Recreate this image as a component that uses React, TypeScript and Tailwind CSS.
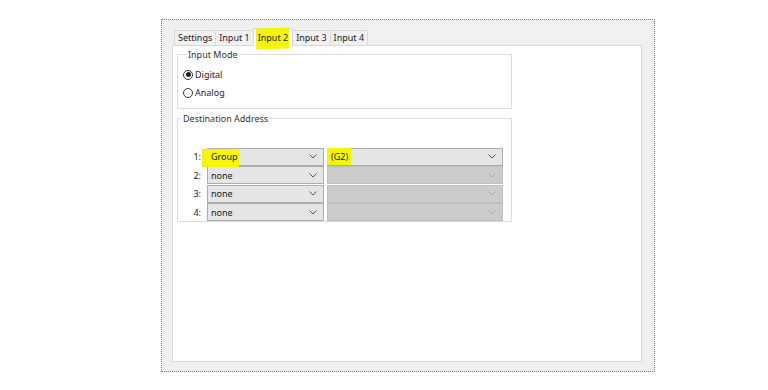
import React from 'react';

const tabs = ['Settings', 'Input 1', 'Input 2', 'Input 3', 'Input 4'];

function Marker({ children, className }: { children: React.ReactNode; className: string }) {
  // yellow highlighter stroke drawn behind the text
  return (
    <span className="relative isolate">
      <span className={`absolute -z-10 bg-[#f4f40c] ${className}`} />
      {children}
    </span>
  );
}

function Chevron({ disabled }: { disabled?: boolean }) {
  return (
    <svg width="8" height="5" viewBox="0 0 8 5" className="shrink-0">
      <path d="M0.5 0.5 L4 4 L7.5 0.5" fill="none" stroke={disabled ? '#a8a8a8' : '#555'} strokeWidth="1" />
    </svg>
  );
}

function Combo({
  width,
  value,
  disabled,
}: {
  width: string;
  value?: React.ReactNode;
  disabled?: boolean;
}) {
  return (
    <div
      className={`${width} h-[18px] flex items-center justify-between pl-[3px] pr-[6px] border ${
        disabled ? 'bg-[#cccccc] border-[#bfbfbf]' : 'bg-[#e5e5e5] border-[#adadad]'
      }`}
    >
      <span className="leading-none">{value}</span>
      <Chevron disabled={disabled} />
    </div>
  );
}

function Radio({ checked, label }: { checked?: boolean; label: string }) {
  return (
    <div className="flex items-center gap-[2px] h-[18px]">
      <span className="w-[10px] h-[10px] rounded-full border border-[#333] bg-white flex items-center justify-center">
        {checked && <span className="w-[5px] h-[5px] rounded-full bg-[#222]" />}
      </span>
      <span>{label}</span>
    </div>
  );
}

export default function App() {
  const rows = [
    { n: '1:', left: <Marker className="-left-[9px] -right-[1px] -top-[1px] -bottom-[4px]">Group</Marker>, right: <Marker className="-left-[4px] -right-[3px] -top-[2px] -bottom-[2px]">(G2)</Marker>, disabled: false },
    { n: '2:', left: 'none', right: null, disabled: true },
    { n: '3:', left: 'none', right: null, disabled: true },
    { n: '4:', left: 'none', right: null, disabled: true },
  ];

  return (
    <div className="w-[768px] h-[390px] bg-white overflow-hidden font-['Noto_Sans',sans-serif] text-[9px] text-[#1a1a1a]">
      <div className="ml-[161px] mt-[19px] w-[494px] h-[353px] border border-dotted border-[#7a7a7a] bg-[#f0f0f0] pt-[8px] pl-[10px] pr-[12px] pb-[9px] flex flex-col">
        <div className="flex items-end h-[17px] pl-[2px]">
          {tabs.map((t) => {
            const active = t === 'Input 2';
            return active ? (
              <div
                key={t}
                className="relative z-10 -mb-px -ml-px h-[18px] px-[4px] flex items-center bg-white border border-b-0 border-[#d9d9d9]"
              >
                <Marker className="-left-[2px] -right-[1px] -top-[3px] -bottom-[4px] -rotate-2">{t}</Marker>
              </div>
            ) : (
              <div
                key={t}
                className="h-[15px] px-[3px] flex items-center bg-[#f0f0f0] border border-b-0 border-[#d9d9d9] -ml-px first:ml-0"
              >
                {t}
              </div>
            );
          })}
        </div>
        <div className="flex-1 bg-white border border-[#d9d9d9] pl-[4px] pt-[2px]">
          <fieldset className="w-[335px] h-[61px] border border-[#dcdcdc] pl-[5px]">
            <legend className="ml-[3px] px-[2px] text-[#333]">Input Mode</legend>
            <div className="mt-[4px] flex flex-col">
              <Radio checked label="Digital" />
              <Radio label="Analog" />
            </div>
          </fieldset>
          <fieldset className="mt-[3px] w-[335px] h-[110px] border border-[#dcdcdc]">
            <legend className="ml-[3px] px-[2px] text-[#333]">Destination Address</legend>
            <div className="mt-[22px] flex flex-col">
              {rows.map((r) => (
                <div key={r.n} className="flex items-center h-[18.5px]">
                  <span className="w-[24px] text-right pr-[1px]">{r.n}</span>
                  <div className="ml-[5px] flex gap-[3px]">
                    <Combo width="w-[117px]" value={r.left} />
                    <Combo width="w-[176px]" value={r.right} disabled={r.disabled} />
                  </div>
                </div>
              ))}
            </div>
          </fieldset>
        </div>
      </div>
    </div>
  );
}
